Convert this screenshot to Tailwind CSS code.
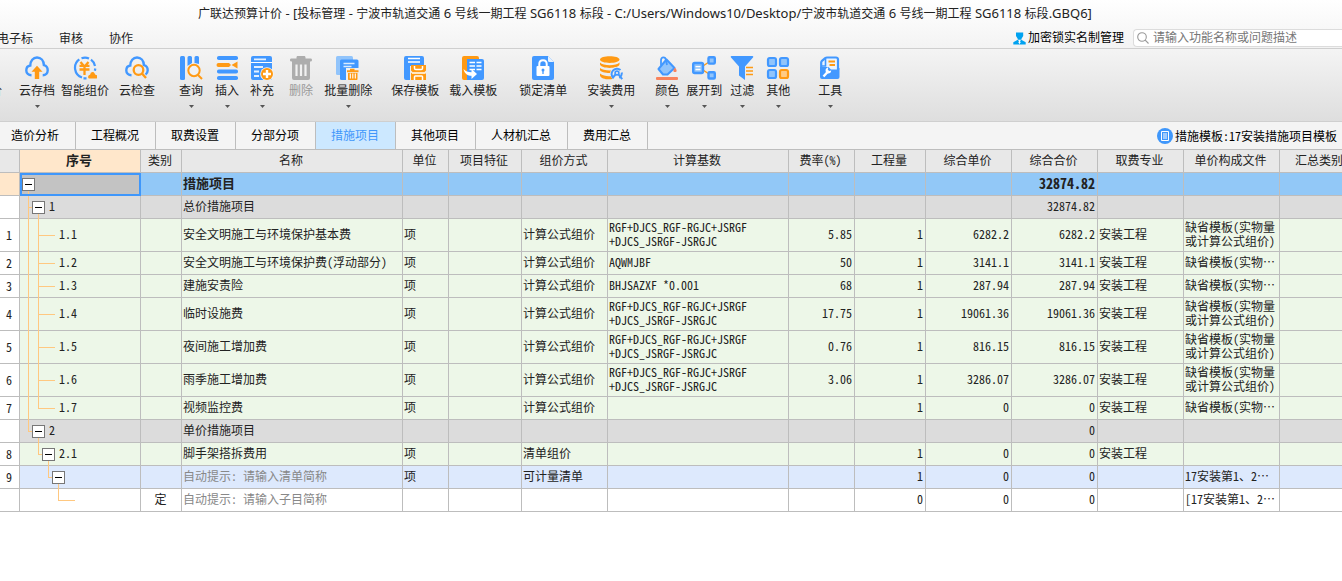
<!DOCTYPE html>
<html lang="zh-CN">
<head>
<meta charset="utf-8">
<meta name="viewport" content="width=device-width, initial-scale=1">
<title>广联达预算计价</title>
<script src="https://cdn.jsdelivr.net/npm/@tailwindcss/browser@4"></script>
</head>
<body class="min-h-screen overflow-hidden bg-white font-['Noto_Sans','Noto_Sans_CJK_SC',sans-serif] text-xs text-[#222]">

<header class="bg-linear-to-b from-white to-[#f3f3f3]">
  <h1 class="flex h-7 items-center justify-center pr-[52px]"><span class="whitespace-pre [&>b]:text-[13px] [&>b]:font-normal">广联达预算计价<b> - [</b>投标管理<b> - </b>宁波市轨道交通<b> 6 </b>号线一期工程<b> SG6118 </b>标段<b> - C:/Users/Windows10/Desktop/</b>宁波市轨道交通<b> 6 </b>号线一期工程<b> SG6118 </b>标段<b>.GBQ6]</b></span></h1>
  <div class="flex h-5 items-center justify-between">
    <nav class="-ml-[3px] flex gap-[26px] pt-[2px]">
      <button type="button">电子标</button>
      <button type="button">审核</button>
      <button type="button">协作</button>
    </nav>
    <div class="flex items-center">
      <button type="button" class="flex items-center gap-[2px] text-black">
        <svg class="h-[13px] w-[13px]" viewBox="0 0 13 13" fill="#00a2f0"><path d="M3 .5h7.200V4L8.500 6.800v.9H4.700v-.9L3 4z"/><path d="M.3 12.500v-2.200l4-2.300h.8l1.400 2.500L7.900 8h.8l4 2.300v2.200z"/><path d="M6.500 8l.9 2.200-.9 2.300-.9-2.300z" fill="#fff"/></svg>
        加密锁实名制管理
      </button>
      <div class="ml-[9px] flex h-[18px] w-[209px] items-center gap-1 rounded-l-sm border border-r-0 border-[#dcdcdc] bg-white pl-[3px]">
        <svg class="h-3 w-3 shrink-0" viewBox="0 0 12 12" fill="none" stroke="#999" stroke-width="1.100"><circle cx="5" cy="5" r="4.300"/><path d="M8.200 8.200l3.300 3.300"/></svg>
        <input type="search" aria-label="搜索" placeholder="请输入功能名称或问题描述" class="min-w-0 flex-1 bg-transparent outline-none placeholder:text-[#777]">
      </div>
    </div>
  </div>
</header>

<div role="toolbar" aria-label="常用功能" class="flex h-[74px] items-start overflow-hidden border-y border-[#cfcfcf] bg-linear-to-b from-[#f4f4f4] to-[#dedede] pt-[7px] whitespace-nowrap [&>button]:flex [&>button]:shrink-0 [&>button]:flex-col [&>button]:items-center [&_svg.i]:h-6 [&_svg.i]:w-6 [&_span]:mt-[2px] [&_span]:leading-[18px] [&_svg.a]:mt-[5px] [&_svg.a]:h-[3px] [&_svg.a]:w-[5px]">
  <button type="button" class="-ml-[10px] pt-6"><span>价</span></button>
  <button type="button" class="ml-[17px]">
    <svg class="i" viewBox="0 0 24 24"><path d="M6.500 19.300C3.500 19.300 1.300 17.200 1.300 14.400c0-2.600 1.700-4.600 4-4.900C5.300 4.800 8.200 1.500 12 1.500c3.900 0 6.700 3.200 6.900 7.600 2.200.5 3.800 2.600 3.800 5.200 0 2.900-2 5-5 5" fill="none" stroke="#4298ff" stroke-width="2.400"/><path d="M12 9.800l5.500 6h-3.300V23H9.800v-7.200H6.500z" fill="#ff9a14"/></svg>
    <span>云存档</span>
    <svg class="a" viewBox="0 0 5 3"><path d="M0 0h5L2.500 3z" fill="#555"/></svg>
  </button>
  <button type="button" class="ml-[6px]">
    <svg class="i" viewBox="0 0 24 24"><path d="M9 21.500A10.300 10.300 0 0 1 6.300 3.400M8.500 2.300a10.300 10.300 0 0 1 7.500.2M18 3.700a10.300 10.300 0 0 1 4 6.300M22.300 12.500l-.4 2.300M10.500 22.300h3" fill="none" stroke="#4298ff" stroke-width="2.200"/><path d="M7.500 6l3 3.500M15.500 6l-3 3.500M6.500 9.800h10M6.500 13.500h10M11.500 9.500V19" fill="none" stroke="#ff9a14" stroke-width="2.300"/><path d="M16.500 22.500h6.200a1.600 1.600 0 0 0 .3-3.600c-.8-.3-1.100-.8-1.500-1.700-1-2-3.700-1.500-4.100.7-.2.800-.8 1-1.500 1.400-1.300.9-1 3.200.6 3.200z" fill="#ff9a14"/></svg>
    <span>智能组价</span>
  </button>
  <button type="button" class="ml-[10px]">
    <svg class="i" viewBox="0 0 24 24"><path d="M6.500 19.300C3.500 19.300 1.300 17.200 1.300 14.400c0-2.600 1.700-4.600 4-4.900C5.300 4.800 8.200 1.500 12 1.500c3.900 0 6.700 3.200 6.900 7.600 2.200.5 3.800 2.600 3.800 5.200 0 2-.9 3.400-2.200 4.200" fill="none" stroke="#4298ff" stroke-width="2.400"/><g fill="none" stroke="#ff9a14" stroke-width="2.300"><circle cx="13.500" cy="14" r="4.800"/><path d="M17 17.500l4 4.500"/></g></svg>
    <span>云检查</span>
  </button>
  <button type="button" class="ml-6">
    <svg class="i" viewBox="0 0 24 24"><g fill="#4298ff"><rect x="1" y="0" width="5" height="24" rx="1.500"/><path d="M8.500 1.500A1.500 1.500 0 0 1 10 0h1.500A1.500 1.500 0 0 1 13 1.500V7l-4.500 3zM15.500 1.500A1.500 1.500 0 0 1 17 0h1.500A1.500 1.500 0 0 1 20 1.500V8l-4.500-1z"/></g><circle cx="15" cy="14.500" r="7" fill="#f1f1f1"/><g fill="none" stroke="#ff9a14" stroke-width="2"><circle cx="15" cy="14.500" r="5.700"/><path d="M19 19l4 4"/></g></svg>
    <span>查询</span>
    <svg class="a" viewBox="0 0 5 3"><path d="M0 0h5L2.500 3z" fill="#555"/></svg>
  </button>
  <button type="button" class="ml-3">
    <svg class="i" viewBox="0 0 24 24"><g fill="#4298ff"><rect x="2" y="0" width="21" height="4" rx="1.800"/><rect x="2" y="13.500" width="21" height="4" rx="1.800"/><rect x="2" y="20" width="21" height="4" rx="1.800"/></g><path d="M3.500 7H14l2 2-2 2H3.500a2 2 0 0 1 0-4zM16.500 9l6-3.500v7z" fill="#ff9a14"/></svg>
    <span>插入</span>
    <svg class="a" viewBox="0 0 5 3"><path d="M0 0h5L2.500 3z" fill="#555"/></svg>
  </button>
  <button type="button" class="ml-[11px]">
    <svg class="i" viewBox="0 0 24 24"><rect x="1" y="0" width="21" height="24" rx="2" fill="#4298ff"/><path d="M1 6.500h21" stroke="#fff" stroke-width="1"/><path d="M4 3.300h12M4 11h9M4 15.500h5M4 20h5" stroke="#e5f1ff" stroke-width="1.800"/><circle cx="17" cy="18" r="6.800" fill="#f4f4f4"/><circle cx="17" cy="18" r="6" fill="#ff9a14"/><path d="M17 14v8M13 18h8" stroke="#fff" stroke-width="2.400"/></svg>
    <span>补充</span>
    <svg class="a" viewBox="0 0 5 3"><path d="M0 0h5L2.500 3z" fill="#555"/></svg>
  </button>
  <button type="button" disabled class="ml-[15px] text-[#999]">
    <svg class="i" viewBox="0 0 24 24"><path d="M7.500 2.500V1.300C7.500.6 8 0 8.800 0h6.400c.8 0 1.300.6 1.300 1.300v1.200H22c1.300 0 1.300 3 0 3H2c-1.300 0-1.300-3 0-3zM3 5.500h18V22a2 2 0 0 1-2 2H5a2 2 0 0 1-2-2z" fill="#adadad"/><path d="M7.500 8.500V20M12 8.500V20M16.500 8.500V20" stroke="#f1f1f1" stroke-width="2.200"/></svg>
    <span>删除</span>
  </button>
  <button type="button" class="ml-[11px]">
    <svg class="i" viewBox="0 0 24 24"><rect x="0" y="0" width="17" height="19" rx="1.500" fill="#91c4fb"/><rect x="4" y="3.500" width="18.500" height="20.500" rx="1.500" fill="#4298ff"/><path d="M7.500 7.500h11M7.500 10.500h8" stroke="#d9ebff" stroke-width="1.500"/><path d="M10 12h14v12H10z" fill="#f0f0f0"/><path d="M14 12.800h4.500v1.400h4v2H11v-2h3zM12 17h9.500v6c0 .6-.4 1-1 1h-7.500c-.6 0-1-.4-1-1z" fill="#ff9a14"/><path d="M14.300 17.500v5M16.800 17.500v5M19.300 17.500v5" stroke="#fff" stroke-width="1.100"/></svg>
    <span>批量删除</span>
    <svg class="a" viewBox="0 0 5 3"><path d="M0 0h5L2.500 3z" fill="#555"/></svg>
  </button>
  <button type="button" class="ml-[19px]">
    <svg class="i" viewBox="0 0 24 24"><path d="M1 2a2 2 0 0 1 2-2h16a2 2 0 0 1 2 2v8H7v14H3a2 2 0 0 1-2-2z" fill="#4298ff"/><path d="M5 2.500h12M5 6h12" stroke="#fff" stroke-width="1.700"/><path d="M8 9h15v5.500L21.500 16l1.500 1.500V24H8v-6.500L9.500 16 8 14.500z" fill="#ff9a14"/><path d="M11.500 10v2.200c0 .8.500 1.300 1.300 1.300h5.400c.8 0 1.300-.5 1.300-1.300V10M11.500 24v-3.200c0-.5.300-.8.800-.8h6.400c.5 0 .8.300.8.800V24" fill="none" stroke="#fff" stroke-width="1.500"/><path d="M9 17h13.500" stroke="#fff" stroke-width="1.500"/></svg>
    <span>保存模板</span>
  </button>
  <button type="button" class="ml-[10px]">
    <svg class="i" viewBox="0 0 24 24"><path d="M1 2a2 2 0 0 1 2-2h13a2 2 0 0 1 2 2v22H3a2 2 0 0 1-2-2z" fill="#ff9a14"/><path d="M6 3h15a2 2 0 0 1 2 2v17a2 2 0 0 1-2 2H6z" fill="#4298ff"/><path d="M8.500 6.500h5.500M8.500 10h5.500M8.500 13.500h5.500M15.500 6.500h5M15.500 10h5M15.500 13.500h5" stroke="#fff" stroke-width="1.500"/><path d="M2.500 13c2 2.500 4.500 3.200 8 3.200V13l5.500 5-5.500 5v-3.200C7 19.800 3.500 18 2.500 13z" fill="#fff"/></svg>
    <span>载入模板</span>
  </button>
  <button type="button" class="ml-[22px]">
    <svg class="i" viewBox="0 0 24 24"><path d="M1 2a2 2 0 0 1 2-2h14l6 6v16a2 2 0 0 1-2 2H3a2 2 0 0 1-2-2z" fill="#4298ff"/><path d="M17 0l6 6h-4.500A1.500 1.500 0 0 1 17 4.500z" fill="#e5f1ff"/><rect x="5.500" y="10" width="13" height="10" rx="1" fill="#fff"/><path d="M8.300 10V8c0-5 7.400-5 7.400 0v2" fill="none" stroke="#fff" stroke-width="2"/><circle cx="12" cy="14" r="1.500" fill="#4298ff"/><path d="M12 14v4" stroke="#4298ff" stroke-width="1.300"/></svg>
    <span>锁定清单</span>
  </button>
  <button type="button" class="ml-5">
    <svg class="i" viewBox="0 0 24 24"><path d="M1 3.500C1-1 20.500-1 20.500 3.500S1 8 1 3.500zM1 6.500c3 3.500 16.500 3.500 19.500 0v2c-1 4.500-18.500 4.500-19.500 0zM1 12c3 3.300 16.500 3.300 19.500 0v2c-1 4-18.500 4-19.500 0zM1 17.500c3 2.500 8 3 11 2.500l1.500 3C9 24 2 23 1 19.500z" fill="#ff9a14"/><circle cx="17.500" cy="17.500" r="6.500" fill="#eee"/><path d="M14.500 22.200A5.300 5.300 0 1 1 21.500 14M22.700 16.500a5.300 5.300 0 0 1-2.400 5.300" fill="none" stroke="#4298ff" stroke-width="2"/><circle cx="18" cy="17" r="1.900" fill="none" stroke="#4298ff" stroke-width="1.600"/><path d="M19.500 18.500l3.700 4.700M16.500 18.500l-3 3.500" stroke="#4298ff" stroke-width="2"/></svg>
    <span>安装费用</span>
    <svg class="a" viewBox="0 0 5 3"><path d="M0 0h5L2.500 3z" fill="#555"/></svg>
  </button>
  <button type="button" class="ml-5">
    <svg class="i" viewBox="0 0 24 24"><path d="M3.500 13L11.500 3.500l8 8.500-7 6.500H8z" fill="#91c4fb" stroke="#4298ff" stroke-width="2" stroke-linejoin="round"/><path d="M6 9.500V4c0-3.500 4.500-3.500 5 0l1 5" fill="none" stroke="#4298ff" stroke-width="1.800"/><path d="M20 11.500c2 2.500 2.300 4.500 0 4.500s-2-2 0-4.500z" fill="#f9835c"/><rect x="1" y="21" width="22" height="3" rx="1" fill="#f9835c"/></svg>
    <span>颜色</span>
    <svg class="a" viewBox="0 0 5 3"><path d="M0 0h5L2.500 3z" fill="#555"/></svg>
  </button>
  <button type="button" class="ml-[7px]">
    <svg class="i" viewBox="0 0 24 24"><path d="M11 10l6-4M11 14l6 4" stroke="#ff9a14" stroke-width="1.500"/><g fill="#91c4fb" stroke="#4298ff" stroke-width="2.400"><rect x="1.200" y="7" width="9.800" height="10" rx="1.500"/><rect x="16.500" y="1.300" width="6.300" height="6.300" rx="1"/><rect x="16.500" y="16.200" width="6.300" height="6.300" rx="1"/></g><path d="M3.500 10.700h5M3.500 13.500h5" stroke="#fff" stroke-width="1.300"/></svg>
    <span>展开到</span>
    <svg class="a" viewBox="0 0 5 3"><path d="M0 0h5L2.500 3z" fill="#555"/></svg>
  </button>
  <button type="button" class="ml-2">
    <svg class="i" viewBox="0 0 24 24"><path d="M1.500 0h21c.8 0 1 1 .5 1.600L15 10.500V24l-6-4.500v-9L1 1.600C.5 1 .7 0 1.500 0z" fill="#4298ff"/><path d="M16 11.500h7M16 15h7M16 18.500h7" stroke="#ff9a14" stroke-width="1.700"/></svg>
    <span>过滤</span>
    <svg class="a" viewBox="0 0 5 3"><path d="M0 0h5L2.500 3z" fill="#555"/></svg>
  </button>
  <button type="button" class="ml-3">
    <svg class="i" viewBox="0 0 24 24"><g fill="#91c4fb" stroke="#4298ff" stroke-width="2.200"><rect x="2" y="2" width="8" height="8" rx="1.800"/><rect x="14" y="2" width="8" height="8" rx="1.800"/><rect x="2" y="14" width="8" height="8" rx="1.800"/></g><rect x="14" y="14" width="8" height="8" rx="1.800" fill="#ffcb85" stroke="#ff9a14" stroke-width="2.200"/></svg>
    <span>其他</span>
    <svg class="a" viewBox="0 0 5 3"><path d="M0 0h5L2.500 3z" fill="#555"/></svg>
  </button>
  <button type="button" class="ml-7">
    <svg class="i" viewBox="0 0 24 24"><path d="M3.200 13V6.500c0-.8.300-1.200.8-1.700l3.200-2.700c.5-.4 1-.6 1.800-.6h9a2 2 0 0 1 2 2V14" fill="#eaf4ff" stroke="#4298ff" stroke-width="2.200"/><path d="M7.500 3v7H3" fill="none" stroke="#4298ff" stroke-width="1.600"/><path d="M2 11h8.500l2.500 2.500h6l1.500-1.500h1v9a2 2 0 0 1-2 2H4a2 2 0 0 1-2-2z" fill="#4298ff"/><path d="M10.500 5.500h6.500M11.500 9h5.500" stroke="#ff9a14" stroke-width="1.800"/><path d="M5.500 20.500l4.500-5" stroke="#fff" stroke-width="2.400"/><path d="M7.800 15.800c-.8-2.500.7-4.300 2.500-4.300l-.5 2.300 1.400 1.200 2-.6c0 2-1.700 3.700-4.200 2.900z" fill="#fff"/></svg>
    <span>工具</span>
    <svg class="a" viewBox="0 0 5 3"><path d="M0 0h5L2.500 3z" fill="#555"/></svg>
  </button>
</div>

<div class="flex h-[27px] items-stretch justify-between overflow-hidden bg-[#f4f4f4] whitespace-nowrap text-black">
  <div role="tablist" class="-ml-1 flex items-stretch [&>button]:border-r [&>button]:border-[#bdbdbd] [&>button]:pr-4 [&>button]:pl-[15px]">
    <button type="button" role="tab">造价分析</button>
    <button type="button" role="tab">工程概况</button>
    <button type="button" role="tab">取费设置</button>
    <button type="button" role="tab">分部分项</button>
    <button type="button" role="tab" aria-selected="true" class="bg-[#cce8ff] text-[#3f97fb]">措施项目</button>
    <button type="button" role="tab">其他项目</button>
    <button type="button" role="tab">人材机汇总</button>
    <button type="button" role="tab">费用汇总</button>
  </div>
  <button type="button" class="flex items-center gap-[2px] pr-[5px] font-['Noto_Sans_Mono_CJK_SC','Noto_Sans_CJK_SC',sans-serif]">
    <svg class="h-4 w-4" viewBox="0 0 16 16"><circle cx="8" cy="8" r="8" fill="#3f97fb"/><path d="M4.500 3.500h7v9h-7zM6 6h4M6 8h4M6 10h4" fill="none" stroke="#fff"/></svg>
    措施模板:17安装措施项目模板
  </button>
</div>

<main class="overflow-hidden">
  <table class="w-[1361px] table-fixed border-separate border-spacing-0 border-t border-[#bdbdbd] font-['Noto_Sans_Mono_CJK_SC','Noto_Sans_CJK_SC',sans-serif] leading-[14px]">
    <colgroup>
      <col class="w-5"><col class="w-[121px]"><col class="w-[41px]"><col class="w-[221px]"><col class="w-[46px]"><col class="w-[73px]"><col class="w-[86px]"><col class="w-[181px]"><col class="w-[66px]"><col class="w-[71px]"><col class="w-[86px]"><col class="w-[86px]"><col class="w-[86px]"><col class="w-[96px]"><col class="w-[81px]">
    </colgroup>
    <thead>
      <tr class="[&>*]:h-[23px] [&>*]:border-r [&>*]:border-b [&>*]:border-[#bdbdbd] [&>*]:bg-[#e8e8e8] [&>*]:pt-0 [&>*]:pr-[2px] [&>*]:pb-[2px] [&>*]:pl-0 [&>*]:font-normal [&>*]:whitespace-nowrap">
        <td></td>
        <th scope="col" class="bg-[#ffe7cb]! text-[13px] font-bold!">序号</th>
        <th scope="col">类别</th><th scope="col">名称</th><th scope="col">单位</th><th scope="col">项目特征</th><th scope="col">组价方式</th><th scope="col">计算基数</th><th scope="col">费率(%)</th><th scope="col">工程量</th><th scope="col">综合单价</th><th scope="col">综合合价</th><th scope="col">取费专业</th><th scope="col">单价构成文件</th><th scope="col">汇总类别</th>
      </tr>
    </thead>
    <tbody id="rows"></tbody>
  </table>
</main>

<script>
const long = 'RGF+DJCS_RGF-RGJC+JSRGF<br>+DJCS_JSRGF-JSRGJC';
const tpl = '缺省模板(实物量<br>或计算公式组价)';
const cut = '缺省模板(实物…';
const calc = '计算公式组价', pro = '安装工程';
// kind, row no., tree guides, code, category, name, unit, feature, pricing, base, rate, qty, unit price, total, profession, file, summary
const data = [
  ['root', '', 'B', '', '', '措施项目', '', '', '', '', '', '', '', '32874.82', '', '', ''],
  ['group', '', 'tB', '1', '', '总价措施项目', '', '', '', '', '', '', '', '32874.82', '', '', ''],
  ['item', '1', 'vT', '1.1', '', '安全文明施工与环境保护基本费', '项', '', calc, long, '5.85', '1', '6282.2', '6282.2', pro, tpl, ''],
  ['item', '2', 'vT', '1.2', '', '安全文明施工与环境保护费(浮动部分)', '项', '', calc, 'AQWMJBF', '50', '1', '3141.1', '3141.1', pro, cut, ''],
  ['item', '3', 'vT', '1.3', '', '建施安责险', '项', '', calc, 'BHJSAZXF *0.001', '68', '1', '287.94', '287.94', pro, cut, ''],
  ['item', '4', 'vT', '1.4', '', '临时设施费', '项', '', calc, long, '17.75', '1', '19061.36', '19061.36', pro, tpl, ''],
  ['item', '5', 'vT', '1.5', '', '夜间施工增加费', '项', '', calc, long, '0.76', '1', '816.15', '816.15', pro, tpl, ''],
  ['item', '6', 'vT', '1.6', '', '雨季施工增加费', '项', '', calc, long, '3.06', '1', '3286.07', '3286.07', pro, tpl, ''],
  ['item', '7', 'vE', '1.7', '', '视频监控费', '项', '', calc, '', '', '1', '0', '0', pro, cut, ''],
  ['group', '', 'eB', '2', '', '单价措施项目', '', '', '', '', '', '', '', '0', '', '', ''],
  ['item', '8', 'seB', '2.1', '', '脚手架搭拆费用', '项', '', '清单组价', '', '', '1', '0', '0', pro, '', ''],
  ['list', '9', 'sseB', '', '', '自动提示: 请输入清单简称', '项', '', '可计量清单', '', '', '1', '0', '0', '', '17安装第1、2…', ''],
  ['sub', '', 'sssE', '', '定', '自动提示: 请输入子目简称', '', '', '', '', '', '0', '0', '0', '', '[17安装第1、2…', ''],
];
const bg = { root: 'bg-[#92c8f7]', group: 'bg-[#dcdcdc]', item: 'bg-[#edf7e8]', list: 'bg-[#dde9fd]', sub: 'bg-white' };
const corner = '<i class="block flex-1 border-b border-l border-[#ffc880]"></i>';
const guide = {
  s: '<span class="w-[10px]"></span>',
  v: '<span class="w-[10px] border-l border-[#ffc880]"></span>',
  t: `<span class="flex w-1 flex-col">${corner}<i class="block flex-1 border-l border-[#ffc880]"></i></span>`,
  e: `<span class="flex w-1 flex-col">${corner}<i class="block flex-1"></i></span>`,
  T: `<span class="flex w-[17px] flex-col">${corner}<i class="block flex-1 border-l border-[#ffc880]"></i></span>`,
  E: `<span class="flex w-[17px] flex-col">${corner}<i class="block flex-1"></i></span>`,
  B: `<span class="flex w-[13px] flex-col items-center"><i class="block flex-1"></i><button type="button" aria-label="折叠" class="flex h-[13px] w-[13px] items-center justify-center border border-[#777] bg-white"><i class="block h-px w-[7px] bg-black"></i></button><i class="block w-px flex-1 bg-[#ffc880]"></i></span>`,
};
document.getElementById('rows').innerHTML = data.map(r => {
  const tall = r[9] === long, root = r[0] === 'root';
  const c = bg[r[0]];
  const hint = r[0] === 'list' || r[0] === 'sub' ? ' text-[#888]' : '';
  const tree = `<div class="flex ${tall ? 'h-[33px]' : 'h-[23px]'} ${root ? 'pl-[2px]' : 'pl-2'} -mb-px">${[...r[2]].map(g => guide[g]).join('')}<span class="self-center pb-[3px] pl-1">${r[3]}</span></div>`;
  const cells = r.slice(4).map((t, i) => {
    const align = i === 0 ? 'text-center' : i >= 6 && i <= 9 ? 'text-right' : 'text-left';
    const bold = root && i === 1 ? ' text-[13px] font-bold' : root && i === 9 ? ' text-sm font-bold' : '';
    return `<td class="${c} ${align}${i === 1 ? hint : ''}${bold}">${t}</td>`;
  }).join('');
  return `<tr class="${tall ? '[&>*]:h-[33px]' : '[&>*]:h-[23px]'} [&>*]:border-r [&>*]:border-b [&>*]:border-[#bdbdbd] [&>*]:pt-0 [&>*]:pr-[2px] [&>*]:pb-[2px] [&>*]:pl-px [&>*]:whitespace-nowrap">
    <th scope="row" class="${root ? 'bg-[#ffe7cb]' : 'bg-white'} pb-0! font-normal">${r[1]}</th>
    <td class="p-0! ${root ? 'bg-[#c3c3c3] outline-2 -outline-offset-2 outline-[#3f97fb]' : c}">${tree}</td>${cells}</tr>`;
}).join('');
</script>
</body>
</html>
